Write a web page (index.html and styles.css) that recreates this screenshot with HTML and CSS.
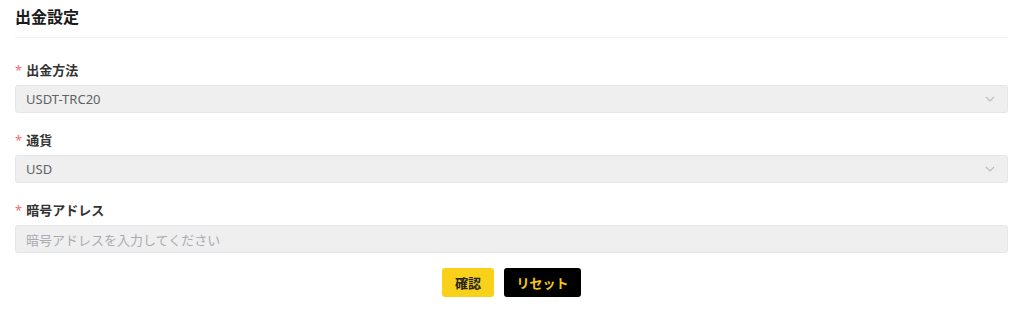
FILE: index.html
```html
<!DOCTYPE html>
<html lang="ja">
<head>
<meta charset="utf-8">
<link rel="stylesheet" href="styles.css">
</head>
<body>
<div class="page">
  <h1 class="title">出金設定</h1>
  <form class="form">
    <div class="field">
      <label class="label"><span class="req">*</span>出金方法</label>
      <div class="control select">
        <span class="value">USDT-TRC20</span>
        <svg class="chev" width="10" height="6" viewBox="0 0 10 6"><path d="M1 1 L5 5 L9 1" fill="none" stroke="#b8bcc4" stroke-width="1.1"/></svg>
      </div>
    </div>
    <div class="field">
      <label class="label"><span class="req">*</span>通貨</label>
      <div class="control select">
        <span class="value">USD</span>
        <svg class="chev" width="10" height="6" viewBox="0 0 10 6"><path d="M1 1 L5 5 L9 1" fill="none" stroke="#b8bcc4" stroke-width="1.1"/></svg>
      </div>
    </div>
    <div class="field last">
      <label class="label"><span class="req">*</span>暗号アドレス</label>
      <div class="control">
        <span class="placeholder">暗号アドレスを入力してください</span>
      </div>
    </div>
    <div class="actions">
      <button type="button" class="btn btn-primary">確認</button>
      <button type="button" class="btn btn-dark">リセット</button>
    </div>
  </form>
</div>
</body>
</html>
```
FILE: styles.css
```css
* { box-sizing: border-box; }
html, body { margin: 0; padding: 0; background: #fff; }
body {
  font-family: "Noto Sans", "Noto Sans CJK JP", sans-serif;
  color: #303133;
}
.page {
  padding: 0 16px 0 15px;
}
.title {
  margin: 0;
  font-size: 16px;
  font-weight: 700;
  line-height: 20px;
  padding-top: 7px;
  padding-bottom: 10px;
  border-bottom: 1px solid #f2f2f2;
  color: #1a1a1a;
}
.form {
  padding-top: 22px;
}
.field {
  margin-bottom: 17px;
}
.field.last {
  margin-bottom: 15px;
}
.label {
  display: flex;
  align-items: center;
  font-size: 13px;
  font-weight: 700;
  color: #333;
  line-height: 20px;
  margin-bottom: 5px;
}
.req {
  color: #f56c6c;
  margin-right: 4px;
  font-weight: 400;
}
.control {
  height: 28px;
  background: #efefef;
  border: 1px solid #e4e6ea;
  border-radius: 3px;
  display: flex;
  align-items: center;
  padding: 0 10px;
  font-size: 13px;
}
.value { color: #606266; flex: 1; }
.placeholder { color: #a8abb2; }
.chev { margin-right: 2px; }
.actions {
  display: flex;
  justify-content: center;
  gap: 10px;
}
.btn {
  height: 29px;
  border: none;
  border-radius: 3px;
  font-family: "Noto Sans CJK JP", sans-serif;
  font-size: 13px;
  font-weight: 700;
  padding: 0;
  white-space: nowrap;
  cursor: pointer;
}
.btn-primary {
  background: #f9d11a;
  color: #222;
  width: 52px;
}
.btn-dark {
  background: #000;
  color: #f2c81b;
  width: 77px;
}
```
